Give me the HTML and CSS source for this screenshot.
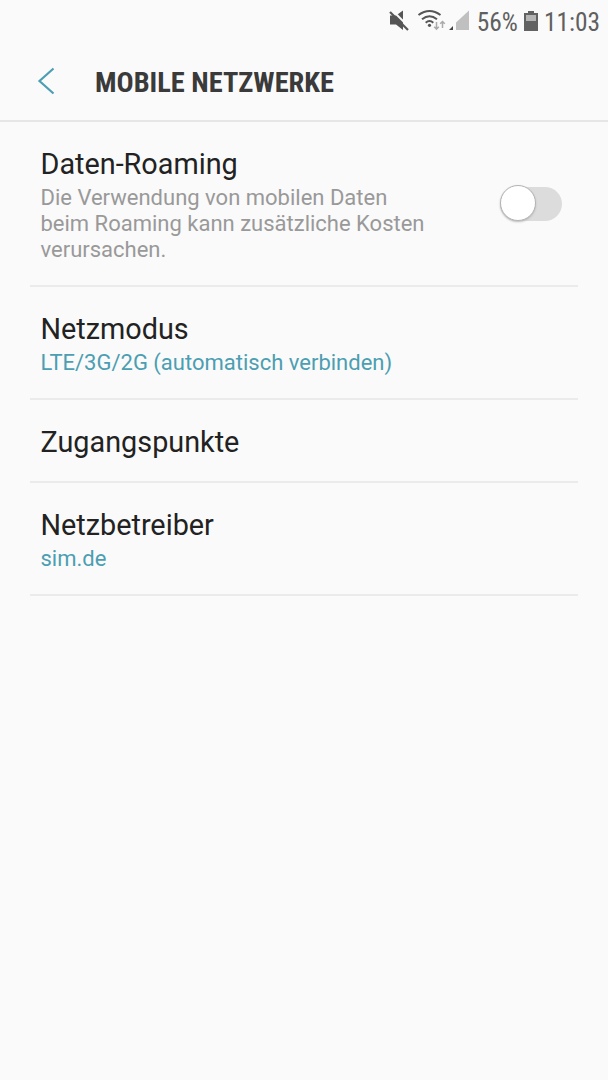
FILE: index.html
```
<!DOCTYPE html>
<html lang="de">
<head>
    <meta charset="UTF-8">
    <meta name="viewport" content="width=device-width, initial-scale=1.0">
    <title>Mobile Netzwerke</title>
    <link rel="stylesheet" href="styles.css">
</head>
<body>
    <!-- Statusleiste -->
    <div class="status-bar">
        <svg class="status-icons" width="84" height="29" viewBox="0 0 84 29">
            <!-- Stumm -->
            <path fill="#555" d="M5 8.500h6l7-5v19.500l-7-5.500H5z"/>
            <path stroke="#fafafa" stroke-width="2" d="M7.500 3.500l17 17"/>
            <path stroke="#555" stroke-width="2.200" d="M5 5l18 18"/>
            <!-- WLAN -->
            <g fill="none" stroke="#555" stroke-width="2">
                <path d="M33.500 8q11-8 22 0"/>
                <path d="M37 12.200q7.500-6 15 0"/>
                <path d="M40.700 15.800q3.800-3.500 7.600 0"/>
            </g>
            <circle cx="44.500" cy="18.300" r="1.600" fill="#555"/>
            <path fill="none" stroke="#aaa" stroke-width="1.500" d="M51.500 15v7M49.200 19.800l2.300 2.300 2.300-2.300M57.500 21v-6.500M55.200 16.800l2.300-2.300 2.300 2.300"/>
            <!-- Empfang -->
            <path fill="#c0c0c0" d="M84 3.500V23H71v-7.500z"/>
            <path fill="#444" d="M68 19v4h-4z"/>
        </svg>
        <span class="battery-text">56%</span>
        <svg class="battery" width="14" height="21" viewBox="0 0 14 21">
            <path fill="#626262" d="M4 0h6v2h4v18H0V2h4z"/>
            <path fill="#b5b5b5" d="M2 4h10v6H2z"/>
        </svg>
        <span class="clock">11:03</span>
    </div>

    <!-- Kopfzeile -->
    <header class="header">
        <svg class="back" width="20" height="29" viewBox="0 0 20 29">
            <path fill="none" stroke="#4c9eb2" stroke-width="2.200" d="M17.500 1.500L3.500 14l14 12.500"/>
        </svg>
        <h1 class="title">MOBILE NETZWERKE</h1>
    </header>

    <!-- Einstellungen -->
    <main class="settings">
        <div class="item">
            <div class="item-text">
                <div class="item-title">Daten-Roaming</div>
                <div class="item-info">Die Verwendung von mobilen Daten<br>beim Roaming kann zusätzliche Kosten<br>verursachen.</div>
            </div>
            <div class="switch"><div class="switch-knob"></div></div>
        </div>
        <div class="item">
            <div class="item-text">
                <div class="item-title">Netzmodus</div>
                <div class="item-info item-value">LTE/3G/2G (automatisch verbinden)</div>
            </div>
        </div>
        <div class="item">
            <div class="item-title">Zugangspunkte</div>
        </div>
        <div class="item">
            <div class="item-text">
                <div class="item-title">Netzbetreiber</div>
                <div class="item-info item-value">sim.de</div>
            </div>
        </div>
    </main>
</body>
</html>
```
FILE: styles.css
```
* {
    box-sizing: border-box;
}
body {
    margin: 0;
    min-height: 1080px;
    background-color: #fafafa;
    color: #222;
    font-family: Roboto, "Liberation Sans", sans-serif;
}
.status-bar {
    display: flex;
    align-items: center;
    justify-content: flex-end;
    height: 43px;
    padding-right: 8px;
    color: #606060;
    font-family: "Roboto Condensed", Roboto, sans-serif;
    font-stretch: condensed;
    font-size: 25.4px;
}
.status-icons {
    margin-right: 8px;
}
.battery {
    margin: 0 6px;
}
.header {
    display: flex;
    align-items: center;
    height: 79px;
    padding: 0 36px;
    border-bottom: 2px solid #e6e6e6;
}
.title {
    margin: 0 0 0 39px;
    padding-top: 2px;
    color: #3a3a3a;
    font-family: "Roboto Condensed", Roboto, sans-serif;
    font-stretch: condensed;
    font-size: 28.4px;
    font-weight: bold;
}
.settings {
    padding: 0 30px;
}
.item {
    display: flex;
    align-items: center;
    justify-content: space-between;
    padding: 24px 16px 21px 10.5px;
    border-bottom: 2px solid #ebebeb;
}
.item-title {
    font-size: 28.8px;
    line-height: 36px;
}
.item-info {
    padding: 3px 0 1px;
    color: #999;
    font-size: 22px;
    line-height: 26px;
}
.item-value {
    color: #4c9eb2;
}
.switch {
    width: 62px;
    height: 34px;
    margin-bottom: 3px;
    border-radius: 17px;
    background-color: #dcdcdc;
}
.switch-knob {
    width: 36px;
    height: 36px;
    margin-top: -2px;
    border: 1px solid #b4b4b4;
    border-radius: 50%;
    background-color: #fff;
    box-shadow: 0 1px 2px #bbb;
}
```
